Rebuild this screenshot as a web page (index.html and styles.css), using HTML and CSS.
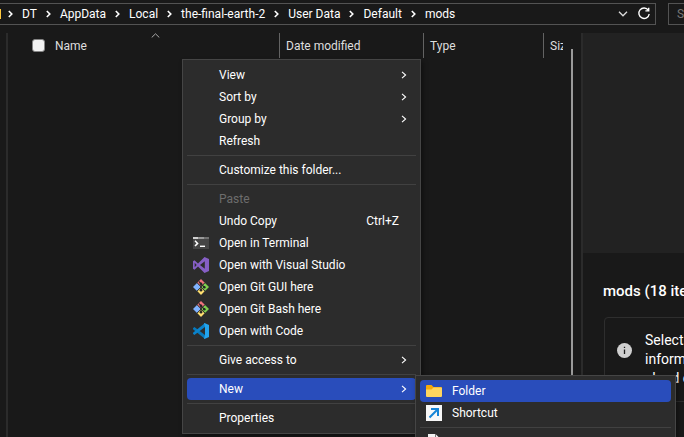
FILE: index.html
```html
<!DOCTYPE html>
<html lang="en">
<head>
<meta charset="utf-8">
<title>mods</title>
<link rel="stylesheet" href="styles.css">
</head>
<body>
<svg class="defs" aria-hidden="true">
  <symbol id="chevron" viewBox="0 0 6 8"><path d="M1 .8 4.600 4 1 7.200" fill="none" stroke="currentColor" stroke-width="1.100"/></symbol>
  <symbol id="crumb" viewBox="0 0 5 8"><path d="M.8 1 3.800 4 .8 7" fill="none" stroke="currentColor" stroke-width="1.600"/></symbol>
  <symbol id="git" viewBox="0 0 16 16">
    <path d="M8 0 11.800 3.800 8 7.600 4.200 3.800Z" fill="#f0757c"/>
    <path d="M4 4 7.800 8 4 12 0 8Z" fill="#80b3ff"/>
    <path d="M12 4 16 8 12 12 8.200 8Z" fill="#7fcf4e"/>
    <path d="M8 8.600 11.600 12.300 8 16 4.400 12.300Z" fill="#ffe070"/>
    <path d="M5.800 2.300 8 4.800V11.500M8 4.800 11.300 8.200" fill="none" stroke="#242424" stroke-width="1.100"/>
    <circle cx="8" cy="4.800" r="1.300" fill="#242424"/><circle cx="8" cy="11.300" r="1.300" fill="#242424"/><circle cx="11.300" cy="8.200" r="1.300" fill="#242424"/>
    <path d="M4.200 3.800 8 7.600 11.800 3.800M4 12 8 8.200 12 12" fill="none" stroke="#2c2c2c" stroke-width=".8"/>
  </symbol>
</svg>

<header class="toolbar">
  <nav class="address" aria-label="Address">
    <span class="address-icon"></span>
    <ol class="crumbs">
      <li><svg class="crumb-sep"><use href="#crumb"/></svg><a href="#">DT</a></li>
      <li><svg class="crumb-sep"><use href="#crumb"/></svg><a href="#">AppData</a></li>
      <li><svg class="crumb-sep"><use href="#crumb"/></svg><a href="#">Local</a></li>
      <li><svg class="crumb-sep"><use href="#crumb"/></svg><a href="#">the-final-earth-2</a></li>
      <li><svg class="crumb-sep"><use href="#crumb"/></svg><a href="#">User Data</a></li>
      <li><svg class="crumb-sep"><use href="#crumb"/></svg><a href="#">Default</a></li>
      <li><svg class="crumb-sep"><use href="#crumb"/></svg><a href="#">mods</a></li>
    </ol>
    <button class="tool history" aria-label="Previous locations"><svg width="10" height="6" viewBox="0 0 10 6"><path d="M1 .8 5 4.800 9 .8" fill="none" stroke="currentColor" stroke-width="1.300"/></svg></button>
    <button class="tool" aria-label="Refresh folder"><svg width="14" height="14" viewBox="0 0 14 14"><path d="M11.300 3.200A5.200 5.200 0 1 0 12.200 7M11.700.8V3.900H8.400" fill="none" stroke="currentColor" stroke-width="1.400"/></svg></button>
  </nav>
  <input class="search" type="text" aria-label="Search" placeholder="S">
</header>

<main class="body">
  <div class="nav-edge"></div>
  <section class="files">
    <div class="list">
      <table class="columns">
        <thead>
          <tr>
            <th class="col-name"><div class="name-cell"><input type="checkbox" aria-label="Select all"><span>Name</span><svg class="sort" width="9" height="5" viewBox="0 0 9 5"><path d="M.7 4.500 4.500 .8 8.300 4.500" fill="none" stroke="currentColor"/></svg></div></th>
            <th class="col-wide">Date modified</th>
            <th class="col-type">Type</th>
            <th class="col-size">Size</th>
          </tr>
        </thead>
      </table>
    </div>
    <div class="scroll"></div>
  </section>
  <aside class="details">
    <div class="preview"></div>
    <h1>mods (18 items)</h1>
    <div class="info">
      <svg class="info-icon" width="15" height="15" viewBox="0 0 15 15"><circle cx="7.500" cy="7.500" r="7.500" fill="#cfcfcf"/><path d="M7.500 6.500V11M7.500 3.700V5.100" stroke="#1a1a1a" stroke-width="1.300"/></svg>
      <p>Select a file to get more<br>information and share your<br>cloud content.</p>
    </div>
  </aside>
</main>

<ul class="menu context">
  <li><button>View<svg class="arrow"><use href="#chevron"/></svg></button></li>
  <li><button>Sort by<svg class="arrow"><use href="#chevron"/></svg></button></li>
  <li><button>Group by<svg class="arrow"><use href="#chevron"/></svg></button></li>
  <li><button>Refresh</button></li>
  <li class="rule"></li>
  <li><button>Customize this folder...</button></li>
  <li class="rule"></li>
  <li><button disabled>Paste</button></li>
  <li><button>Undo Copy<kbd>Ctrl+Z</kbd></button></li>
  <li><button><svg class="icon" viewBox="0 0 16 16"><path d="M0 2H16V14H0Z" fill="#454545"/><path d="M0 2H5.500V4H0Z" fill="#d0d0d0"/><path d="M5.500 2H11V4H5.500Z" fill="#999"/><path d="M11 2H16V4H11Z" fill="#707070"/><path d="M2 5.800 4.600 8.400 2 11" fill="none" stroke="#fff" stroke-width="1.500"/><path d="M7 11.300H12" stroke="#fff" stroke-width="1.400"/></svg>Open in Terminal</button></li>
  <li><button><svg class="icon" viewBox="0 0 16 16"><path d="M0 4.200 1.500 3.200 5 6.400 11.500 0 16 2V14L11.500 16 5 9.600 1.500 12.800 0 11.800ZM1.700 5.800V10.200L3.700 8ZM7 8 11.800 11.700V4.300Z" fill="#865fc5" fill-rule="evenodd"/></svg>Open with Visual Studio</button></li>
  <li><button><svg class="icon"><use href="#git"/></svg>Open Git GUI here</button></li>
  <li><button><svg class="icon"><use href="#git"/></svg>Open Git Bash here</button></li>
  <li><button><svg class="icon" viewBox="0 0 16 16"><path d="M0 5.200 1.400 4 12 12V16L0 6.200Z" fill="#0879bb"/><path d="M0 10.800 1.400 12 12 4V0L0 9.800Z" fill="#0a82ca"/><path d="M11.500 0 16 2V14L11.500 16 11 15.500 12 12V4L11 .5Z" fill="#24a4ec"/></svg>Open with Code</button></li>
  <li class="rule"></li>
  <li><button>Give access to<svg class="arrow"><use href="#chevron"/></svg></button></li>
  <li class="rule"></li>
  <li class="parent">
    <button class="active">New<svg class="arrow"><use href="#chevron"/></svg></button>
    <ul class="menu submenu">
      <li><button class="active"><svg class="icon" viewBox="0 0 16 16"><path d="M0 3Q0 2 1 2H5.500L7.500 4H15Q16 4 16 5V8H0Z" fill="#f5a90c"/><path d="M0 6.500H5.500L7.500 4.500H15Q16 4.500 16 5.500V13Q16 14 15 14H1Q0 14 0 13Z" fill="#ffd55e"/></svg>Folder</button></li>
      <li><button><svg class="icon" viewBox="0 0 16 16"><path d="M0 0H16V16H0Z" fill="#f7f7f7"/><path d="M3.500 12.500 11.500 4.500M5 4H12V11" fill="none" stroke="#1484d7" stroke-width="2"/></svg>Shortcut</button></li>
      <li class="rule"></li>
      <li><button aria-label="New document"><svg class="icon" viewBox="0 0 16 16"><path d="M2 0H9.500L14 4.500V16H2Z" fill="#f2f2f2"/><path d="M9.500 0V4.500H14" fill="none" stroke="#777"/></svg></button></li>
    </ul>
  </li>
  <li class="rule"></li>
  <li><button>Properties</button></li>
</ul>
</body>
</html>
```
FILE: styles.css
```css
* { box-sizing: border-box; }

body {
  margin: 0;
  min-height: 100vh;
  display: flex;
  flex-direction: column;
  overflow: hidden;
  background: #191919;
  color: #fff;
  font: 12px/16px "Segoe UI", Roboto, sans-serif;
}

html { overflow: hidden; }
.defs { display: none; }
ul, ol { list-style: none; margin: 0; padding: 0; }
button { font: inherit; color: inherit; background: none; border: 0; padding: 0; }
a { color: inherit; text-decoration: none; }

/* Address bar */
.toolbar {
  display: flex;
  gap: 12px;
  padding-top: 3px;
  height: 33px;
}

.address {
  flex: 1;
  display: flex;
  align-items: center;
  height: 22px;
  border: 1px solid #535353;
  border-left: 0;
  padding-right: 2px;
}

.address-icon { width: 1px; height: 10px; background: #ffc83d; }
.crumbs { flex: 1; display: flex; gap: 9px; padding-left: 7px; }
.crumbs li { display: flex; align-items: center; gap: 9px; }
.crumb-sep { width: 5px; height: 8px; }
.tool { display: flex; padding: 2px; }
.history { margin-right: 5px; color: #ddd; }

.search {
  width: 16px;
  height: 22px;
  border: 1px solid #535353;
  border-right: 0;
  border-radius: 0;
  background: none;
  padding: 0 0 0 8px;
  font: inherit;
  color: #fff;
  appearance: none;
}
.search::placeholder { color: #777; }

/* Window body */
.body { flex: 1; display: flex; }
.nav-edge { width: 8px; border-right: 2px solid #2b2b2b; }
.files { flex: 1; min-width: 0; display: flex; }
.list { flex: 1; min-width: 0; overflow: hidden; }

.columns { width: 100%; height: 25px; table-layout: fixed; border-spacing: 0; color: #dedede; }
.columns th { padding: 0 0 0 6px; font-weight: 400; text-align: left; border-left: 1px solid #636363; overflow: hidden; }
.columns .col-name { border: 0; padding: 0 0 0 24px; }
.col-wide { width: 144px; }
.col-type { width: 120px; }
.col-size { width: 20px; }
.name-cell { display: flex; align-items: center; gap: 10px; }
.name-cell input {
  appearance: none;
  width: 13px;
  height: 13px;
  margin: 0;
  background: #f3f3f3;
  border: 1px solid #858585;
  border-radius: 3px;
}
.sort { margin: 0 0 20px 54px; color: #aaa; }
.scroll { width: 18px; padding-left: 8px; }
.scroll::before { content: ""; display: block; width: 2px; height: calc(100% - 16px); margin-top: 16px; background: #9a9a9a; }

/* Details pane */
.details { width: 103px; border-left: 2px solid #2b2b2b; overflow: hidden; white-space: nowrap; }
.preview { height: 220px; background: #222; }
.details h1 { margin: 28px 0 16px 20px; font-size: 15px; line-height: 20px; font-weight: 500; }
.info {
  display: flex;
  align-items: center;
  gap: 13px;
  width: 260px;
  margin-left: 21px;
  padding: 13px 12px;
  border: 1px solid #2e2e2e;
  border-radius: 4px;
}
.info-icon { flex: none; margin-bottom: 18px; }
.info p { margin: 0; font-size: 14px; line-height: 19px; }

/* Menus */
.menu {
  position: absolute;
  padding: 4px;
  background: #2c2c2c;
  border: 1px solid #454545;
  box-shadow: 2px 3px 5px rgba(0, 0, 0, 0.4);
}
.context { left: 182px; top: 59px; width: 239px; }
.submenu { left: 228px; top: -3px; width: 261px; }
.parent { position: relative; }
.menu button {
  position: relative;
  display: flex;
  align-items: center;
  width: 100%;
  height: 22px;
  padding: 0 13px 0 32px;
  border-radius: 4px;
  white-space: nowrap;
}
.menu .active { background: #294dbb; }
.menu button:disabled { color: #6d6d6d; }
.menu kbd { margin-left: auto; margin-right: 4px; font: inherit; }
.arrow { width: 6px; height: 8px; margin-left: auto; margin-right: -4px; }
.icon { flex: none; width: 16px; height: 16px; margin-left: -26px; margin-right: 10px; }
.rule { height: 1px; margin: 3px 0; background: #414141; }
```
